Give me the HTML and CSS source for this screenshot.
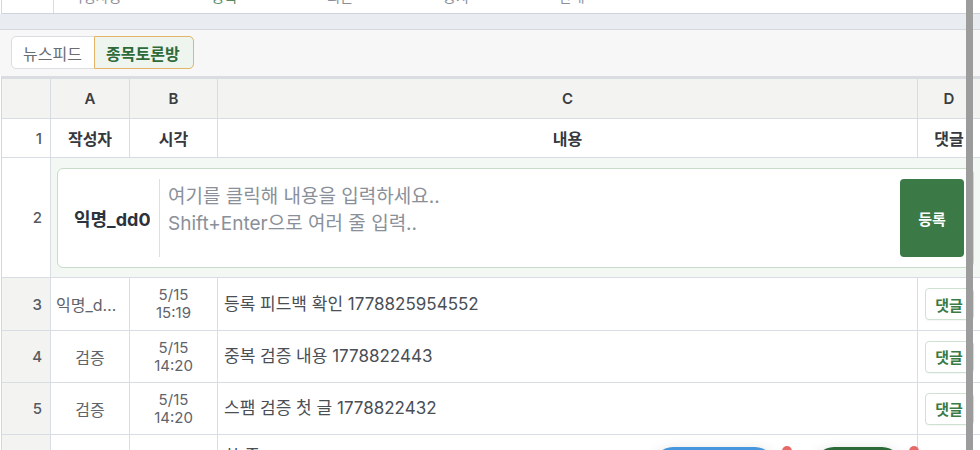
FILE: index.html
```html
<!DOCTYPE html>
<html lang="ko">
<head>
<meta charset="utf-8">
<title>종목토론방</title>
<link rel="stylesheet" href="styles.css">
</head>
<body>
<div class="prev">
  <div class="prev-num"></div>
  <div class="prev-text"><span>익명사용</span><span class="g">종목</span><span>최근</span><span>공지</span><span>안내</span></div>
</div>
<div class="band"></div>
<div class="tabbar">
  <div class="tabs">
    <div class="tab">뉴스피드</div>
    <div class="tab active">종목토론방</div>
  </div>
</div>
<div class="sheet">
  <div class="c hd"></div>
  <div class="c hd">A</div>
  <div class="c hd">B</div>
  <div class="c hd">C</div>
  <div class="c hd">D</div>

  <div class="c rn plain">1</div>
  <div class="c th">작성자</div>
  <div class="c th">시각</div>
  <div class="c th">내용</div>
  <div class="c th">댓글</div>

  <div class="c rn plain">2</div>
  <div class="composer-cell">
    <div class="composer">
      <div class="composer-name"><span class="name-clip">익명_dd0f3a</span></div>
      <div class="composer-input"><div class="ph-line">여기를 클릭해 내용을 입력하세요..</div><div class="ph-line">Shift+Enter으로 여러 줄 입력..</div></div>
      <div class="composer-btn">등록</div>
    </div>
  </div>

  <div class="c rn">3</div>
  <div class="c author"><span class="ell">익명_dd0f3a</span></div>
  <div class="c time">5/15<br>15:19</div>
  <div class="c body">등록 피드백 확인 1778825954552</div>
  <div class="c act"><span class="reply">댓글</span></div>

  <div class="c rn">4</div>
  <div class="c author"><span class="ell">검증</span></div>
  <div class="c time">5/15<br>14:20</div>
  <div class="c body">중복 검증 내용 1778822443</div>
  <div class="c act"><span class="reply">댓글</span></div>

  <div class="c rn">5</div>
  <div class="c author"><span class="ell">검증</span></div>
  <div class="c time">5/15<br>14:20</div>
  <div class="c body">스팸 검증 첫 글 1778822432</div>
  <div class="c act"><span class="reply">댓글</span></div>

  <div class="c rn">6</div>
  <div class="c author"><span class="ell">검증</span></div>
  <div class="c time">5/15<br>14:19</div>
  <div class="c body">한 줄<br>두 번째 줄</div>
  <div class="c act"><span class="reply">댓글</span></div>
</div>

<div class="floating">
  <div class="pill blue"></div>
  <span class="dot"></span>
  <div class="pill green"></div>
  <span class="dot"></span>
</div>
<div class="scrollbar"></div>
</body>
</html>
```
FILE: styles.css
```css
* { box-sizing: border-box; }
html, body { margin: 0; padding: 0; }
body {
  width: 980px;
  height: 450px;
  overflow: hidden;
  position: relative;
  background: #fff;
  font-family: "Inter", "Noto Sans CJK KR", sans-serif;
}

.prev {
  height: 14px;
  margin-left: 1px;
  border-left: 1px solid #d3d7de;
  border-bottom: 1px solid #cfd4dc;
  display: flex;
  overflow: hidden;
}
.prev-num { width: 52px; flex: none; border-right: 1px solid #d8dce3; }
.prev-text {
  display: flex;
  gap: 90px;
  padding-left: 16px;
  font-size: 14px;
  line-height: 14px;
  margin-top: -10px;
  color: #8a8f98;
  white-space: nowrap;
}
.prev-text .g { color: #5a8a62; }

.band {
  height: 16px;
  background: #e9ecf1;
  border-bottom: 1px solid #d5d8de;
}

.tabbar {
  height: 46px;
  background: #f7f7f7;
  padding: 6px 0 0 11px;
}
.tabs {
  display: inline-flex;
  height: 33px;
  background: #fff;
  border: 1px solid #dcdde0;
  border-radius: 5px;
}
.tab {
  display: flex;
  align-items: center;
  padding: 0 11px;
  font-size: 16px;
  color: #6a6d72;
}
.tab:first-child { width: 82px; }
.tab.active {
  width: 100px;
  margin: -1px -1px -1px 0;
  padding: 0 11px;
  background: #eef5ee;
  border: 1px solid #e4b566;
  border-radius: 0 5px 5px 0;
  color: #2f6b3a;
  font-weight: 700;
}

.sheet {
  margin-left: 1px;
  border-top: 3px solid #d9dce1;
  border-left: 1px solid #d3d7de;
  display: grid;
  grid-template-columns: 48px 78px 87px 699px 62px;
  grid-template-rows: 39px 38px 119px 52px 51px 51px 70px;
  gap: 1px;
  background: #d8dce3;
}
.c {
  background: #fff;
  display: flex;
  align-items: center;
  justify-content: center;
  font-size: 16px;
  color: #5f636a;
  min-width: 0;
}
.hd {
  background: #f3f4f2;
  color: #3a3d42;
  font-size: 15px;
  font-weight: 600;
}
.th {
  color: #35383d;
  font-size: 16px;
  font-weight: 600;
}
.rn {
  justify-content: flex-end;
  padding-right: 8px;
  background: #f3f3f1;
  color: #555a60;
  font-size: 15px;
  font-weight: 500;
}
.rn.plain { background: #fff; }

.composer-cell {
  grid-column: 2 / 6;
  background: #f4f8f4;
  padding: 10px 6px 9px 6px;
}
.composer {
  height: 100px;
  display: flex;
  align-items: stretch;
  background: #fff;
  border: 1px solid #c6dcc8;
  border-radius: 6px;
  padding: 10px 9px 10px 0;
}
.composer-name {
  width: 102px;
  flex: none;
  padding: 0 9px 0 16px;
  display: flex;
  align-items: center;
  border-right: 1px solid #d5e5d6;
}
.name-clip {
  display: block;
  width: 77px;
  overflow: hidden;
  white-space: nowrap;
  font-size: 18px;
  font-weight: 700;
  color: #2c323d;
}
.composer-input {
  flex: 1;
  padding: 4px 0 0 8px;
  font-size: 19px;
  color: #8a9099;
}
.ph-line {
  height: 27px;
  line-height: 27px;
  white-space: nowrap;
}
.composer-btn {
  width: 64px;
  flex: none;
  display: flex;
  align-items: center;
  justify-content: center;
  background: #3b7a47;
  border-radius: 4px;
  color: #fff;
  font-size: 15px;
  font-weight: 600;
}

.author { padding: 0 5px; }
.ell {
  display: block;
  max-width: 100%;
  overflow: hidden;
  white-space: nowrap;
  text-overflow: ellipsis;
}
.time {
  font-size: 15px;
  line-height: 18px;
  text-align: center;
  flex-direction: column;
}
.body {
  justify-content: flex-start;
  padding-left: 6px;
  font-size: 17px;
  line-height: 27px;
  color: #4a4e55;
}
.act { padding: 0 6px; }
.reply {
  width: 49px;
  height: 32px;
  display: flex;
  align-items: center;
  justify-content: center;
  border: 1px solid #cfe2d1;
  border-radius: 4px;
  background: #fff;
  color: #3a7a45;
  font-size: 15px;
  font-weight: 700;
  box-shadow: 0 1px 1px rgba(0,0,0,0.04);
}

.floating {
  position: absolute;
  left: 653px;
  top: 446px;
  display: flex;
  align-items: flex-start;
}
.pill {
  height: 40px;
  border-radius: 20px;
  box-shadow: 0 2px 14px rgba(0,0,0,0.12);
}
.pill.blue { width: 122px; margin-top: 1px; background: #4596dc; }
.pill.green { width: 88px; margin-top: 1px; margin-left: 22px; background: #2c6a38; }
.dot {
  width: 10px;
  height: 10px;
  border-radius: 50%;
  background: #e66a6a;
  margin-left: 7px;
}
.scrollbar {
  position: absolute;
  left: 966px;
  top: 0;
  width: 7px;
  height: 450px;
  background: #9c9c9c;
}
```
